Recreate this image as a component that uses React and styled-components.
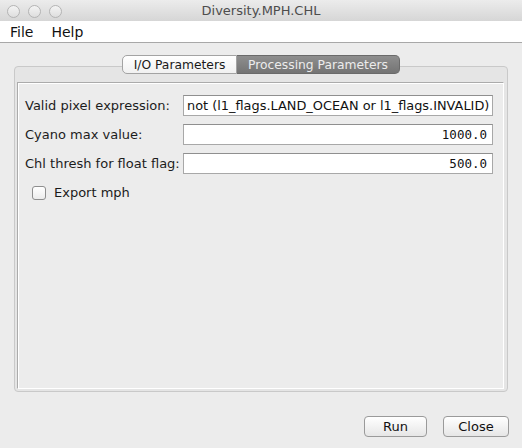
import React from "react";
import styled, { createGlobalStyle } from "styled-components";

const GlobalStyle = createGlobalStyle`
  html, body {
    margin: 0;
    padding: 0;
    background: #ececec;
  }
  body {
    font-family: "DejaVu Sans", "Liberation Sans", sans-serif;
    color: #1a1a1a;
  }
`;

const Window = styled.div`
  width: 522px;
  height: 448px;
  display: flex;
  flex-direction: column;
  background: #ececec;
  overflow: hidden;
`;

const TitleBar = styled.div`
  height: 21px;
  position: relative;
  display: flex;
  align-items: center;
  justify-content: center;
  background: linear-gradient(#ececec, #d6d6d6);
  font-size: 13px;
  color: #4d4d4d;
`;

const Lights = styled.div`
  position: absolute;
  left: 7px;
  top: 5px;
  display: flex;
  gap: 8px;
`;

const Light = styled.span`
  width: 11px;
  height: 11px;
  border-radius: 50%;
  border: 1px solid #b4b4b4;
  background: linear-gradient(#f4f4f4, #dedede);
`;

const MenuBar = styled.div`
  height: 21px;
  background: #fff;
  border-bottom: 1px solid #a8a8a8;
  display: flex;
  align-items: center;
  padding-left: 10px;
  gap: 18px;
  font-size: 14px;
  color: #111;
`;

const Body = styled.div`
  flex: 1;
  display: flex;
  flex-direction: column;
  padding: 12px 13px 11px 14px;
`;

const TabRow = styled.div`
  display: flex;
  justify-content: center;
  margin-bottom: -8px;
  position: relative;
  z-index: 1;
  padding-right: 1px;
`;

const Tab = styled.div`
  height: 19px;
  box-sizing: border-box;
  display: flex;
  align-items: center;
  justify-content: center;
  white-space: nowrap;
  font-size: 12.3px;
  border: 1px solid ${(p) => (p.$active ? "#6a6a6a" : "#a3a3a3")};
  border-radius: ${(p) => (p.$active ? "0 5px 5px 0" : "5px 0 0 5px")};
  border-left-width: ${(p) => (p.$active ? "0" : "1px")};
  background: ${(p) =>
    p.$active
      ? "linear-gradient(#8e8e8e, #747474)"
      : "linear-gradient(#ffffff, #f1f1f1)"};
  color: ${(p) => (p.$active ? "#ececec" : "#1a1a1a")};
  width: ${(p) => p.$w}px;
`;

const Panel = styled.div`
  flex: 1;
  margin-right: 1px;
  display: flex;
  flex-direction: column;
  border: 1px solid #c9c9c9;
  border-radius: 4px;
  background: #e5e5e5;
  padding: 15px 3px 2px 2px;
`;

const Inner = styled.div`
  flex: 1;
  border: 1px solid #ababab;
  border-right-color: #fff;
  border-bottom-color: #fff;
  box-shadow: inset 1px 1px 0 #fff;
  background: #ececec;
  padding: 12px 10px 0 7px;
`;

const Form = styled.div`
  display: grid;
  grid-template-columns: 158px 1fr;
  row-gap: 8px;
  align-items: center;
`;

const Label = styled.label`
  font-size: 13px;
  color: #1c1c1c;
  white-space: nowrap;
`;

const Field = styled.div`
  height: 21px;
  box-sizing: border-box;
  background: #fff;
  border: 1px solid #a8a8a8;
  border-top-color: #8f8f8f;
  display: flex;
  align-items: center;
  justify-content: ${(p) => (p.$num ? "flex-end" : "flex-start")};
  padding: 0 5px 0 3px;
  font-family: ${(p) =>
    p.$num
      ? '"DejaVu Sans Mono", "Liberation Mono", monospace'
      : '"DejaVu Sans", "Liberation Sans", sans-serif'};
  font-size: ${(p) => (p.$num ? "12.5px" : "12.9px")};
  color: #111;
  white-space: nowrap;
  overflow: hidden;
`;

const CheckRow = styled.div`
  display: flex;
  align-items: center;
  gap: 8px;
  margin: 11px 0 0 7px;
  font-size: 13px;
`;

const Box = styled.span`
  width: 12px;
  height: 12px;
  border: 1px solid #8e8e8e;
  border-radius: 3px;
  background: linear-gradient(#ffffff, #ececec);
`;

const ButtonRow = styled.div`
  display: flex;
  justify-content: flex-end;
  gap: 16px;
  margin-top: 24px;
`;

const Button = styled.button`
  height: 21px;
  width: ${(p) => p.$w}px;
  box-sizing: border-box;
  border: 1px solid #9a9a9a;
  border-radius: 4px;
  background: linear-gradient(#ffffff, #f0f0f0 60%, #e6e6e6);
  font-family: "DejaVu Sans", "Liberation Sans", sans-serif;
  font-size: 13px;
  color: #111;
  padding: 0;
`;

export default function App() {
  return (
    <>
      <GlobalStyle />
      <Window>
        <TitleBar>
          <Lights>
            <Light />
            <Light />
            <Light />
          </Lights>
          Diversity.MPH.CHL
        </TitleBar>
        <MenuBar>
          <span>File</span>
          <span>Help</span>
        </MenuBar>
        <Body>
          <TabRow>
            <Tab $w={115}>I/O Parameters</Tab>
            <Tab $active $w={163}>Processing Parameters</Tab>
          </TabRow>
          <Panel>
            <Inner>
              <Form>
                <Label>Valid pixel expression:</Label>
                <Field>not (l1_flags.LAND_OCEAN or l1_flags.INVALID)</Field>
                <Label>Cyano max value:</Label>
                <Field $num>1000.0</Field>
                <Label>Chl thresh for float flag:</Label>
                <Field $num>500.0</Field>
              </Form>
              <CheckRow>
                <Box />
                Export mph
              </CheckRow>
            </Inner>
          </Panel>
          <ButtonRow>
            <Button $w={63}>Run</Button>
            <Button $w={66}>Close</Button>
          </ButtonRow>
        </Body>
      </Window>
    </>
  );
}
